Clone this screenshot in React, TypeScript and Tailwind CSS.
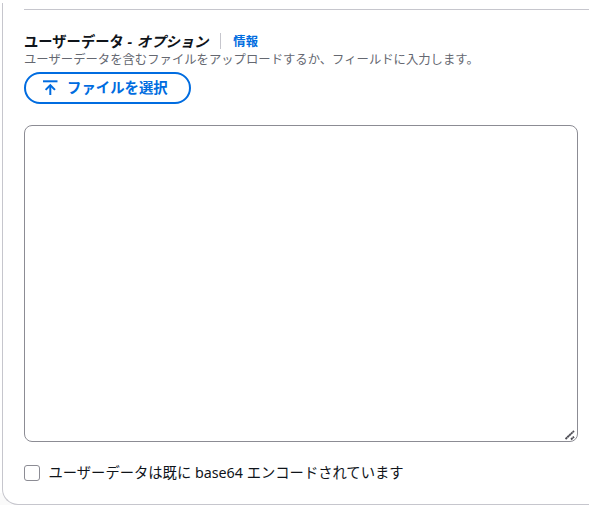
import { useState } from "react";

function UploadIcon() {
  return (
    <svg width="16" height="16" viewBox="0 0 16 16" fill="none" stroke="currentColor" strokeWidth="2">
      <path d="M0 1.300h14.500" />
      <path d="M7.300 15V5.500" />
      <path d="M2.600 9.900 7.300 5.200l4.700 4.700" />
    </svg>
  );
}

function ResizeGrip() {
  return (
    <svg
      className="pointer-events-none absolute right-[2px] bottom-px"
      width="11"
      height="11"
      viewBox="0 0 11 11"
      fill="none"
      stroke="#4d4d55"
      strokeWidth="1.9"
      strokeDasharray="2.2 0.3"
    >
      <path d="M0.500 9 9 1" />
      <path d="M6 9.500 9 6.700" />
    </svg>
  );
}

export default function App() {
  const [userData, setUserData] = useState("");
  const [encoded, setEncoded] = useState(false);

  return (
    <div className="h-[507px] w-[597px] overflow-hidden bg-white pt-[3px] font-['Noto_Sans','Noto_Sans_CJK_JP',sans-serif]">
      <div className="flex h-[502px] w-[589px] bg-[linear-gradient(to_top,#fafafa_12px,#ffffff_12px)] pl-[2px]">
        <section className="flex w-full flex-col rounded-bl-[16px] border-b border-l border-[#c6c6cd] bg-white pl-[21px]">
          <div className="mt-[6px] h-px shrink-0 bg-[#c6c6cd]" />

          <div className="mt-[21px] flex h-5 items-center text-[14.300px] leading-5 font-bold whitespace-nowrap text-[#0f141a]">
            <h2 className="pt-px">
              ユーザーデータ <i>- <span className="ml-px">オプション</span></i>
            </h2>
            <span className="ml-[12px] h-4 w-px bg-[#c6c6cd]" />
            <a href="#" className="ml-3 pt-px text-[12.300px] text-[#006ce0]">
              情報
            </a>
          </div>
          <p className="h-4 pt-px text-[12.350px] leading-4 whitespace-nowrap text-[#656871]">
            ユーザーデータを含むファイルをアップロードするか、フィールドに入力します。
          </p>

          <button
            type="button"
            className="mt-[5px] flex h-[32px] w-[167px] shrink-0 items-center rounded-full border-2 border-[#006ce0] pl-[17px] text-[14.400px] font-bold whitespace-nowrap text-[#006ce0]"
          >
            <UploadIcon />
            <span className="ml-2">ファイルを選択</span>
          </button>

          <div className="relative mt-[21px] h-[317px] w-[554px] shrink-0">
            <textarea
              value={userData}
              onChange={(e) => setUserData(e.target.value)}
              className="block h-full w-full resize-none rounded-[8px] border border-[#8c8c94] px-3 py-1 text-sm outline-none"
            />
            <ResizeGrip />
          </div>

          <label className="mt-[21px] flex h-5 items-center text-[14.300px] leading-5 whitespace-nowrap text-[#0f141a]">
            <input
              type="checkbox"
              checked={encoded}
              onChange={(e) => setEncoded(e.target.checked)}
              className="size-4 appearance-none rounded-[3px] border border-[#8c8c94] checked:bg-[#006ce0]"
            />
            <span className="ml-[8.500px]">ユーザーデータは既に base64 エンコードされています</span>
          </label>
        </section>
      </div>
    </div>
  );
}
